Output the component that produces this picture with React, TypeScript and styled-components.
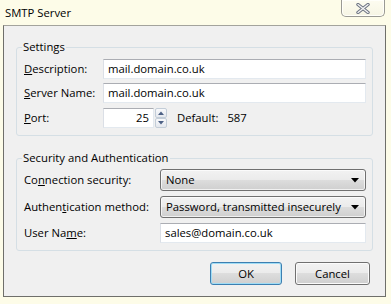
import React, { FC } from 'react'
import styled, { createGlobalStyle } from 'styled-components'

const Global = createGlobalStyle`
  html, body {
    margin: 0;
    padding: 0;
    width: 391px;
    height: 304px;
    overflow: hidden;
    background: #fdfce8;
  }
  body {
    font-family: 'Open Sans', 'Liberation Sans', sans-serif;
    font-size: 11.3px;
    color: #000;
  }
`

const Frame = styled.div`
  display: flex;
  flex-direction: column;
  width: 391px;
  height: 304px;
`

const TitleBar = styled.div`
  display: flex;
  align-items: flex-start;
  height: 25px;
  flex-shrink: 0;
`

const Title = styled.div`
  padding-top: 5px;
  padding-left: 5px;
  line-height: 16px;
`

const CloseButton = styled.div`
  margin-left: auto;
  margin-right: 6px;
  width: 42px;
  height: 16px;
  border: 1px solid #9a9a94;
  border-top: none;
  border-radius: 0 0 5px 5px;
  background: linear-gradient(#fdfcf0, #f6f5e4);
  box-shadow: inset 0 0 0 1px #fffffa;
  display: flex;
  align-items: center;
  justify-content: center;
`

const Client = styled.div`
  flex: 1;
  margin: 0 5px 7px 3px;
  border: 1px solid #6f6f6a;
  border-top-color: #a3a39c;
  background: #f0f0f0;
  padding: 13px 12px 0 12px;
  display: flex;
  flex-direction: column;
`

const Group = styled.fieldset<{ $top?: number }>`
  margin: ${p => p.$top || 0}px 0 0 0;
  padding: ${p => (p.$top ? 3 : 4)}px 6px 7px 7px;
  border: 1px solid #d5dfe5;
  border-radius: 3px;
  min-width: 0;
`

const Legend = styled.legend`
  padding: 0 1px;
  margin-left: -2px;
  line-height: 16px;
`

const Rows = styled.div<{ $label: number }>`
  display: grid;
  grid-template-columns: ${p => p.$label}px 1fr;
  row-gap: 4px;
  align-items: center;
`

const Label = styled.label`
  line-height: 16px;
  white-space: nowrap;
`

const Key = styled.span`
  text-decoration: underline;
`

const TextBox = styled.div<{ $width?: number; $right?: boolean }>`
  box-sizing: border-box;
  height: 20px;
  width: ${p => (p.$width ? `${p.$width}px` : 'auto')};
  background: #fff;
  border: 1px solid #e3e9ef;
  border-top-color: #abadb3;
  border-left-color: #dbdfe6;
  padding: 0 4px;
  line-height: 18px;
  text-align: ${p => (p.$right ? 'right' : 'left')};
  white-space: nowrap;
`

const PortRow = styled.div`
  display: flex;
  align-items: center;
  margin-top: 1px;
`

const Spinner = styled.div`
  display: flex;
  flex-direction: column;
  width: 12px;
  height: 20px;
  margin-left: 1px;
`

const SpinHalf = styled.div`
  flex: 1;
  box-sizing: border-box;
  border: 1px solid #c3cdd8;
  border-radius: 2px;
  background: linear-gradient(#f8f9fb, #e4e8ee);
  display: flex;
  align-items: center;
  justify-content: center;
`

const DefaultText = styled.span`
  margin-left: 10px;
  line-height: 16px;
`

const DefaultValue = styled.span`
  margin-left: 9px;
  line-height: 16px;
`

const SecurityRows = styled(Rows)`
  row-gap: 5px;
`

const Combo = styled.div`
  box-sizing: border-box;
  height: 22px;
  border: 1px solid #707070;
  border-radius: 3px;
  background: linear-gradient(#f2f2f2 0%, #ebebeb 50%, #dddddd 50%, #cfcfcf 100%);
  box-shadow: inset 0 0 0 1px rgba(255, 255, 255, 0.7);
  display: flex;
  align-items: center;
  padding: 0 6px 0 5px;
  white-space: nowrap;
`

const ComboText = styled.span`
  flex: 1;
  line-height: 16px;
`

const ButtonRow = styled.div`
  display: flex;
  justify-content: flex-end;
  gap: 13px;
  margin-top: 11px;
  padding-right: 3px;
`

const Button = styled.button<{ $default?: boolean; $width: number }>`
  box-sizing: border-box;
  width: ${p => p.$width}px;
  height: 23px;
  padding: 0;
  font: inherit;
  color: #000;
  border: 1px solid ${p => (p.$default ? '#3c7fb1' : '#707070')};
  border-radius: 3px;
  background: linear-gradient(#f2f2f2 0%, #ebebeb 50%, #dddddd 50%, #cfcfcf 100%);
  box-shadow: inset 0 0 0 1px ${p => (p.$default ? '#9fdcf5' : '#fbfbfb')};
`

const Arrow: FC = () => (
  <svg width='8' height='5' viewBox='0 0 8 5'>
    <path d='M0 0 H8 L4 4.5 Z' fill='#000' />
  </svg>
)

const SpinArrow: FC<{ up?: boolean }> = ({ up }) => (
  <svg width='6' height='4' viewBox='0 0 6 4'>
    <path d={up ? 'M0 4 L3 0.5 L6 4 Z' : 'M0 0 L3 3.5 L6 0 Z'} fill='#4d6185' />
  </svg>
)

const App: FC = () => {
  return (
    <Frame>
      <Global />
      <TitleBar>
        <Title>SMTP Server</Title>
        <CloseButton>
          <svg width='14' height='11' viewBox='0 0 14 11'>
            <path d='M2 1.5 L12 9.5 M12 1.5 L2 9.5' stroke='#6b7280' strokeWidth='3.4' strokeLinecap='round' />
            <path d='M2 1.5 L12 9.5 M12 1.5 L2 9.5' stroke='#f4f4f4' strokeWidth='1.4' strokeLinecap='round' />
          </svg>
        </CloseButton>
      </TitleBar>

      <Client>
        <Group>
          <Legend>Settings</Legend>
          <Rows $label={79}>
            <Label><Key>D</Key>escription:</Label>
            <TextBox>mail.domain.co.uk</TextBox>

            <Label><Key>S</Key>erver Name:</Label>
            <TextBox>mail.domain.co.uk</TextBox>

            <Label style={{ marginTop: 1 }}><Key>P</Key>ort:</Label>
            <PortRow>
              <TextBox $width={51} $right>25</TextBox>
              <Spinner>
                <SpinHalf><SpinArrow up /></SpinHalf>
                <SpinHalf><SpinArrow /></SpinHalf>
              </Spinner>
              <DefaultText>Default:</DefaultText>
              <DefaultValue>587</DefaultValue>
            </PortRow>
          </Rows>
        </Group>

        <Group $top={14}>
          <Legend>Security and Authentication</Legend>
          <SecurityRows $label={136}>
            <Label>Co<Key>n</Key>nection security:</Label>
            <Combo>
              <ComboText>None</ComboText>
              <Arrow />
            </Combo>

            <Label>Authen<Key>t</Key>ication method:</Label>
            <Combo>
              <ComboText>Password, transmitted insecurely</ComboText>
              <Arrow />
            </Combo>

            <Label>User Na<Key>m</Key>e:</Label>
            <TextBox>sales@domain.co.uk</TextBox>
          </SecurityRows>
        </Group>

        <ButtonRow>
          <Button $default $width={72}>OK</Button>
          <Button $width={75}>Cancel</Button>
        </ButtonRow>
      </Client>
    </Frame>
  )
}

export default App
